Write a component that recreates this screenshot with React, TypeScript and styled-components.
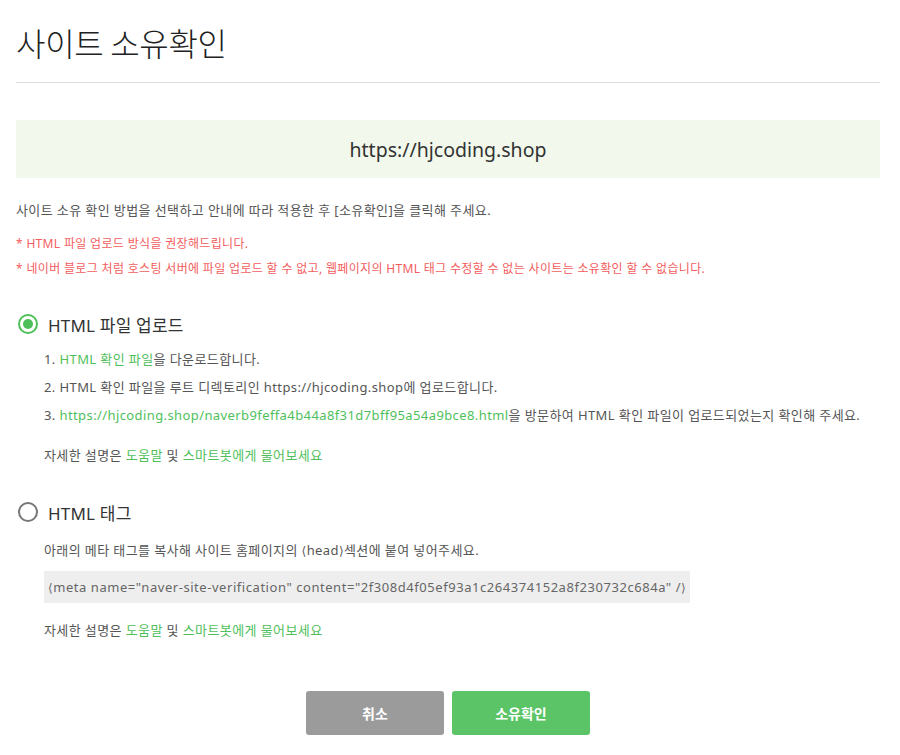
import React from "react";
import styled, { createGlobalStyle } from "styled-components";

const Global = createGlobalStyle`
  html, body { margin: 0; padding: 0; background: #fff; }
  body { font-family: "Noto Sans", "Noto Sans CJK KR", sans-serif; color: #333; }
`;

const GREEN = "#4fbf5b";
const RED = "#f35d5d";

const Page = styled.div`
  width: 864px;
  padding: 0 0 0 16px;
`;

const Title = styled.h1`
  margin: 0;
  padding-top: 20px;
  height: 82px;
  box-sizing: border-box;
  font-family: "Noto Sans CJK KR", sans-serif;
  font-size: 32px;
  font-weight: 300;
  line-height: 44px;
  color: #222;
  letter-spacing: -0.3px;
`;

const Divider = styled.hr`
  margin: 0;
  border: 0;
  border-top: 1px solid #dedede;
`;

const UrlBox = styled.div`
  margin-top: 37px;
  height: 58px;
  background: #f2f8eb;
  display: flex;
  align-items: center;
  justify-content: center;
  font-size: 19.5px;
  color: #333;
`;

const Desc = styled.p`
  margin: 22px 0 0;
  font-size: 13px;
  line-height: 20px;
  color: #555;
  letter-spacing: 0.4px;
`;

const Notes = styled.div`
  margin-top: 14px;
  display: flex;
  flex-direction: column;
  gap: 6px;
`;

const Note = styled.div`
  font-size: 12px;
  line-height: 19px;
  color: ${RED};
  letter-spacing: 0.33px;
`;

const Section = styled.section<{ $top: number }>`
  margin-top: ${(p) => p.$top}px;
`;

const RadioRow = styled.label`
  display: flex;
  align-items: center;
  gap: 10px;
  height: 26px;
  font-size: 17px;
  color: #333;
  letter-spacing: 0.2px;
`;

const Radio = styled.span<{ $checked?: boolean }>`
  width: 20px;
  height: 20px;
  margin-left: 2px;
  box-sizing: border-box;
  border-radius: 50%;
  border: 2px solid ${(p) => (p.$checked ? GREEN : "#777")};
  display: flex;
  align-items: center;
  justify-content: center;
  &::after {
    content: "";
    width: 10px;
    height: 10px;
    border-radius: 50%;
    background: ${(p) => (p.$checked ? GREEN : "transparent")};
  }
`;

const Body = styled.div`
  padding-left: 28px;
  font-size: 13px;
  color: #555;
  letter-spacing: 0.4px;
`;

const Line = styled.div<{ $top?: number }>`
  line-height: 20px;
  margin-top: ${(p) => p.$top ?? 8}px;
`;

const Link = styled.span`
  color: ${GREEN};
`;

const Code = styled.div`
  margin-top: 10px;
  display: inline-block;
  height: 32px;
  line-height: 32px;
  padding: 0 4px;
  background: #eeeeee;
  color: #666;
  font-size: 13px;
  letter-spacing: 0.55px;
`;

const Bracket = styled.span`
  font-family: "DejaVu Sans", sans-serif;
  font-size: 12px;
`;

const Buttons = styled.div`
  margin-top: 51px;
  display: flex;
  justify-content: center;
  gap: 8px;
`;

const Button = styled.button<{ $primary?: boolean }>`
  width: 138px;
  height: 44px;
  border: 0;
  border-radius: 3px;
  background: ${(p) => (p.$primary ? "#5bc467" : "#9b9b9b")};
  color: #fff;
  font-family: "Noto Sans CJK KR", sans-serif;
  font-weight: 700;
  font-size: 14px;
  cursor: pointer;
`;

const Help = () => (
  <>
    자세한 설명은 <Link>도움말</Link> 및 <Link>스마트봇에게 물어보세요</Link>
  </>
);

export default function App() {
  return (
    <>
      <Global />
      <Page>
        <Title>사이트 소유확인</Title>
        <Divider />
        <UrlBox>https://hjcoding.shop</UrlBox>
        <Desc>사이트 소유 확인 방법을 선택하고 안내에 따라 적용한 후 [소유확인]을 클릭해 주세요.</Desc>
        <Notes>
          <Note>* HTML 파일 업로드 방식을 권장해드립니다.</Note>
          <Note>
            * 네이버 블로그 처럼 호스팅 서버에 파일 업로드 할 수 없고, 웹페이지의 HTML 태그 수정할 수 없는 사이트는 소유확인 할 수 없습니다.
          </Note>
        </Notes>

        <Section $top={33}>
          <RadioRow>
            <Radio $checked />
            HTML 파일 업로드
          </RadioRow>
          <Body>
            <Line $top={12}>
              1. <Link>HTML 확인 파일</Link>을 다운로드합니다.
            </Line>
            <Line>2. HTML 확인 파일을 루트 디렉토리인 https://hjcoding.shop에 업로드합니다.</Line>
            <Line>
              3. <Link>https://hjcoding.shop/naverb9feffa4b44a8f31d7bff95a54a9bce8.html</Link>을 방문하여 HTML 확인 파일이 업로드되었는지 확인해 주세요.
            </Line>
            <Line $top={20}>
              <Help />
            </Line>
          </Body>
        </Section>

        <Section $top={34}>
          <RadioRow>
            <Radio />
            HTML 태그
          </RadioRow>
          <Body>
            <Line $top={15}>
              아래의 메타 태그를 복사해 사이트 홈페이지의 <Bracket>⟨</Bracket>head<Bracket>⟩</Bracket>섹션에 붙여 넣어주세요.
            </Line>
            <Code>
              <Bracket>⟨</Bracket>meta name="naver-site-verification" content="2f308d4f05ef93a1c264374152a8f230732c684a" /<Bracket>⟩</Bracket>
            </Code>
            <Line $top={17}>
              <Help />
            </Line>
          </Body>
        </Section>

        <Buttons>
          <Button>취소</Button>
          <Button $primary>소유확인</Button>
        </Buttons>
      </Page>
    </>
  );
}
